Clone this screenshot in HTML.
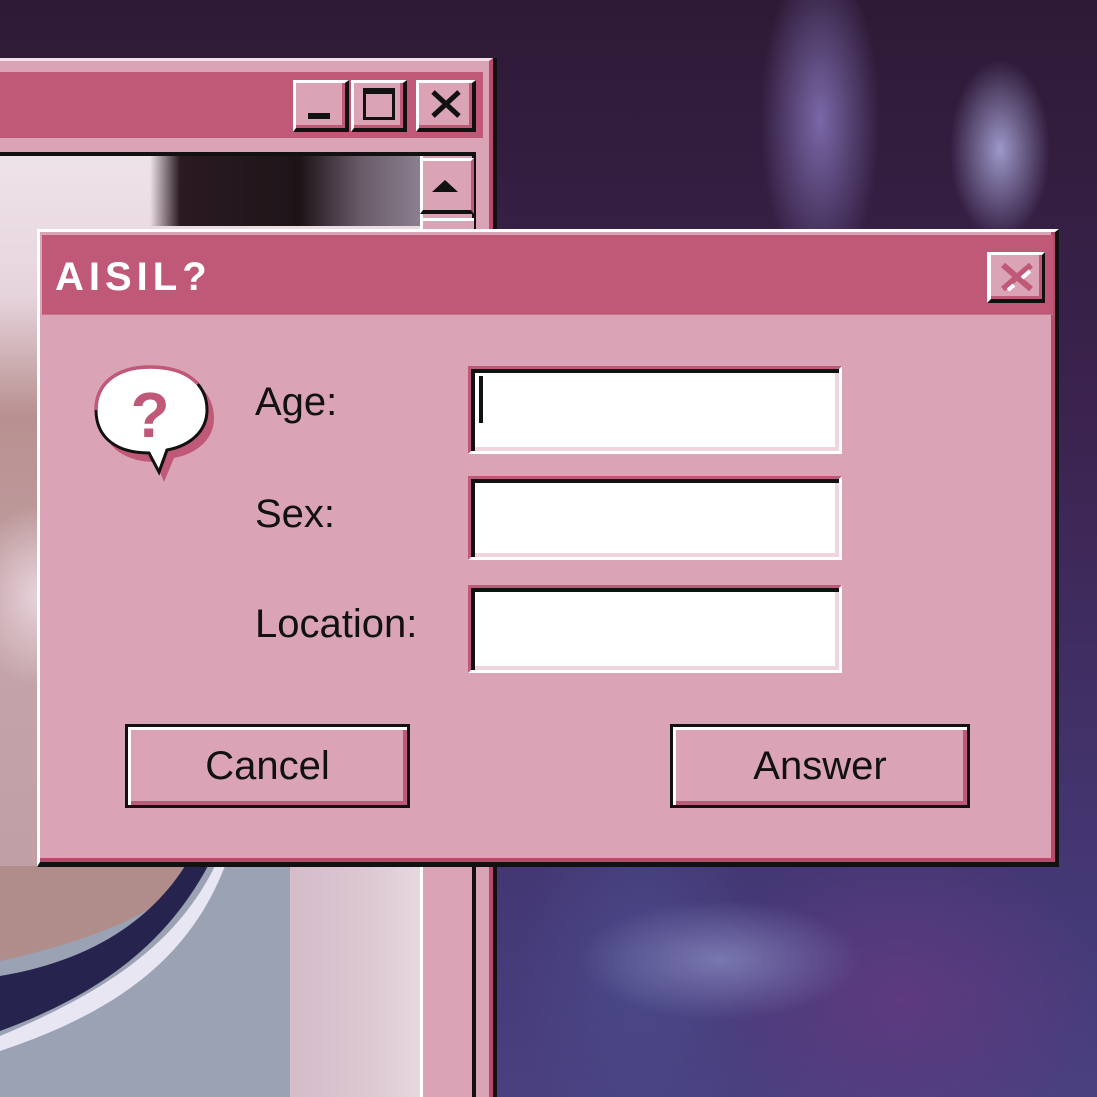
<!DOCTYPE html>
<html><head><meta charset="utf-8"><style>
*{margin:0;padding:0;box-sizing:border-box}
body{width:1097px;height:1097px;overflow:hidden;position:relative;font-family:"Liberation Sans",sans-serif;
background:
radial-gradient(ellipse 60px 160px at 820px 120px,#7a68a8 0%,rgba(110,80,150,0) 100%),
radial-gradient(ellipse 50px 90px at 1000px 150px,#9c98c8 0%,rgba(120,110,170,0) 100%),
radial-gradient(ellipse 140px 60px at 720px 960px,#7a78b0 0%,rgba(90,80,150,0) 100%),
radial-gradient(ellipse 200px 160px at 900px 1000px,#5e3a80 0%,rgba(80,50,110,0) 100%),
radial-gradient(ellipse 120px 220px at 640px 980px,#4a4888 0%,rgba(70,60,120,0) 100%),
linear-gradient(180deg,#2e1a36 0%,#3c2450 40%,#453a78 85%,#4a4080 100%);}
.abs{position:absolute}
</style></head><body>

<div class="abs" style="left:0;top:58px;width:493px;height:1039px;background:#dba4b6;border-top:3px solid #f4e0e8;border-right:4px solid #b84a6c;"></div>
<div class="abs" style="left:493px;top:58px;width:4px;height:1039px;background:#111"></div>
<div class="abs" style="left:0;top:72px;width:483px;height:66px;background:#c05878"></div>
<div class="abs" style="left:293px;top:80px;width:56px;height:52px;background:#dba4b6;border-top:3px solid #fff;border-left:3px solid #fff;border-right:4px solid #111;border-bottom:4px solid #111;box-shadow:inset -3px -3px 0 #c05878"></div>
<div class="abs" style="left:308px;top:113px;width:22px;height:6px;background:#111"></div>
<div class="abs" style="left:351px;top:80px;width:56px;height:52px;background:#dba4b6;border-top:3px solid #fff;border-left:3px solid #fff;border-right:4px solid #111;border-bottom:4px solid #111;box-shadow:inset -3px -3px 0 #c05878"></div>
<div class="abs" style="left:363px;top:88px;width:32px;height:32px;border:3px solid #111;border-top-width:6px"></div>
<div class="abs" style="left:416px;top:80px;width:60px;height:52px;background:#dba4b6;border-top:3px solid #fff;border-left:3px solid #fff;border-right:4px solid #111;border-bottom:4px solid #111;box-shadow:inset -3px -3px 0 #c05878"></div>
<svg class="abs" style="left:430px;top:90px" width="32" height="28"><path d="M3 2 L29 26 M29 2 L3 26" stroke="#111" stroke-width="5"/></svg>
<div class="abs" style="left:0;top:152px;width:476px;height:945px;background:#111"></div>
<div class="abs" style="left:0;top:156px;width:420px;height:941px;
background:
radial-gradient(ellipse 70px 90px at 40px 440px,#e8d4dc 0%,rgba(232,212,220,0) 100%),
linear-gradient(90deg,rgba(0,0,0,0) 0,rgba(0,0,0,0) 150px,#2a1a22 180px,#1e1418 300px,#6a5a68 360px,#8a8090 420px) 0 0/420px 70px no-repeat,
linear-gradient(180deg,#efe3ea 0,#e6d4dc 140px,#b89090 260px,#c4a4a8 500px,#c0a0a4 700px,#c0a0a4 100%);"></div>
<div class="abs" style="left:0;top:866px;width:290px;height:231px;background:#9aa2b4"></div>
<div class="abs" style="left:290px;top:866px;width:130px;height:231px;background:linear-gradient(90deg,#d4bcc8,#dcc8d2 60%,#e6d8e0)"></div>
<svg class="abs" style="left:0;top:866px" width="290" height="231"><path d="M0 0 H200 C170 40 110 70 0 95 Z" fill="#b08c8a"/><path d="M215 0 C180 70 120 120 0 170 L0 185 C120 145 190 90 225 0 Z" fill="#e8e6f2"/><path d="M185 0 C150 55 90 95 0 110 L0 165 C110 125 170 70 208 0 Z" fill="#26244e"/></svg>
<div class="abs" style="left:420px;top:156px;width:52px;height:941px;background:#dba4b6;border-left:3px solid #fff"></div>
<div class="abs" style="left:420px;top:158px;width:54px;height:56px;background:#dba4b6;border-top:3px solid #fff;border-left:3px solid #fff;border-right:3px solid #c05878;border-bottom:4px solid #111"></div>
<svg class="abs" style="left:430px;top:178px" width="30" height="16"><path d="M2 14 L15 2 L28 14 Z" fill="#111"/></svg>
<div class="abs" style="left:420px;top:218px;width:54px;height:20px;background:#dba4b6;border-top:3px solid #fff;border-left:3px solid #fff"></div>

<div class="abs" style="left:37px;top:229px;width:1022px;height:638px;background:#dba4b6;border-top:3px solid #fff;border-left:3px solid #fff;border-right:4px solid #111;border-bottom:5px solid #111;box-shadow:inset -4px -4px 0 #b84a6c"></div>
<div class="abs" style="left:42px;top:235px;width:1011px;height:80px;background:#c05878;border-bottom:1px solid #c9708c"></div>
<div class="abs" style="left:55px;top:254px;color:#fff;font-weight:bold;font-size:40px;letter-spacing:5px;line-height:46px">AISIL?</div>
<div class="abs" style="left:987px;top:252px;width:58px;height:51px;background:#dba4b6;border-top:3px solid #fff;border-left:4px solid #fff;border-right:3px solid #111;border-bottom:4px solid #111;box-shadow:inset -3px -3px 0 #c05878"></div>
<svg class="abs" style="left:1000px;top:262px" width="34" height="30"><path d="M3 3 L31 27 M31 3 L3 27" stroke="#c05878" stroke-width="6"/><path d="M22 16 L30 9 M8 28 L14 23" stroke="#fff" stroke-width="4"/></svg>

<svg class="abs" style="left:92px;top:362px" width="125" height="125" viewBox="0 0 125 125">
<path d="M62 10 C98 10 122 28 122 56 C122 78 104 92 82 96 L72 120 L64 100 C32 100 10 84 10 56 C10 28 30 10 62 10 Z" fill="#c05878"/>
<path d="M58 5 C94 5 115 22 115 48 C115 70 97 84 75 88 L67 110 L57 91 C25 91 4 76 4 48 C4 22 24 5 58 5 Z" fill="#fff" stroke="#111" stroke-width="3"/>
<path d="M4 48 C4 22 24 5 58 5 C80 5 96 11 106 22" fill="none" stroke="#c05878" stroke-width="3.5"/>
<text x="58" y="75" text-anchor="middle" font-family="Liberation Sans,sans-serif" font-weight="bold" font-size="64" fill="#c05878">?</text>
</svg>

<div class="abs" style="left:255px;top:380px;font-size:40px;color:#111">Age:</div>
<div class="abs" style="left:255px;top:492px;font-size:40px;color:#111">Sex:</div>
<div class="abs" style="left:255px;top:602px;font-size:40px;color:#111">Location:</div>

<div class="abs" style="left:468px;top:366px;width:374px;height:88px;background:#fff;border-top:3px solid #c05878;border-left:3px solid #c05878;border-right:3px solid #fff;border-bottom:3px solid #fff;box-shadow:inset 4px 4px 0 #111,inset -4px -4px 0 #f0d4de"></div>
<div class="abs" style="left:479px;top:376px;width:4px;height:47px;background:#111"></div>
<div class="abs" style="left:468px;top:476px;width:374px;height:84px;background:#fff;border-top:3px solid #c05878;border-left:3px solid #c05878;border-right:3px solid #fff;border-bottom:3px solid #fff;box-shadow:inset 4px 4px 0 #111,inset -4px -4px 0 #f0d4de"></div>
<div class="abs" style="left:468px;top:585px;width:374px;height:88px;background:#fff;border-top:3px solid #c05878;border-left:3px solid #c05878;border-right:3px solid #fff;border-bottom:3px solid #fff;box-shadow:inset 4px 4px 0 #111,inset -4px -4px 0 #f0d4de"></div>

<div class="abs" style="left:125px;top:724px;width:285px;height:84px;background:#dba4b6;border:3px solid #111;box-shadow:inset 3px 3px 0 #fff,inset -4px -4px 0 #c05878;font-size:40px;color:#111;text-align:center;line-height:78px">Cancel</div>
<div class="abs" style="left:670px;top:724px;width:300px;height:84px;background:#dba4b6;border:3px solid #111;box-shadow:inset 3px 3px 0 #fff,inset -4px -4px 0 #c05878;font-size:40px;color:#111;text-align:center;line-height:78px">Answer</div>
</body></html>
